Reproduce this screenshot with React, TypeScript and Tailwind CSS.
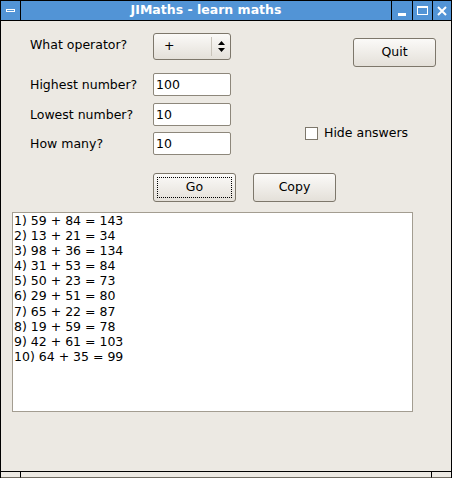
import { useState } from 'react'

const font = "font-['DejaVu_Sans',sans-serif]"

const results = [
  '1) 59 + 84 = 143',
  '2) 13 + 21 = 34',
  '3) 98 + 36 = 134',
  '4) 31 + 53 = 84',
  '5) 50 + 23 = 73',
  '6) 29 + 51 = 80',
  '7) 65 + 22 = 87',
  '8) 19 + 59 = 78',
  '9) 42 + 61 = 103',
  '10) 64 + 35 = 99',
]

const btnBase =
  'flex items-center rounded-[3px] border border-[#7d776b] bg-gradient-to-b from-[#fbfaf8] to-[#e4e0d9] text-[12.5px] text-black'
const btn = `${btnBase} justify-center`

const field =
  'h-[23px] w-[78px] rounded-[2px] border border-[#8d877b] bg-white px-[2px] text-[12.5px] text-black outline-none'

const TitleButton = ({ children, w }: { children: React.ReactNode; w: string }) => (
  <div className={`${w} flex h-full items-center justify-center bg-[#5294d6] border-l border-black`}>{children}</div>
)

const App = () => {
  const [hide, setHide] = useState(false)

  return (
    <div className={`${font} flex h-[478px] w-[452px] flex-col border-x border-t border-black bg-[#ece9e3] text-black`}>
      {/* title bar */}
      <div className="flex h-[20px] border-b border-black">
        <div className="flex w-[19px] items-center justify-center bg-[#5294d6]">
          <div className="h-[3px] w-[9px] border border-white" />
        </div>
        <div className="flex flex-1 items-center justify-center border-l border-black bg-[#5294d6] text-[12.5px] font-bold text-white">
          JIMaths - learn maths
        </div>
        <TitleButton w="w-[21px]">
          <div className="mt-[7px] h-[3px] w-[8px] bg-white" />
        </TitleButton>
        <TitleButton w="w-[20px]">
          <div className="h-[9px] w-[11px] border border-t-[2px] border-white" />
        </TitleButton>
        <TitleButton w="w-[19px]">
          <svg width="10" height="10" viewBox="0 0 10 10">
            <path d="M1 1 L9 9 M9 1 L1 9" stroke="white" strokeWidth="2" />
          </svg>
        </TitleButton>
      </div>

      {/* body */}
      <div className="flex flex-1 flex-col">
        <div className="flex pt-[12px]">
          <div className="ml-[29px] grid grid-cols-[123px_78px] items-center text-[12.5px]">
            <span className="pb-[3px]">What operator?</span>
            <div className={`${btnBase} h-[27px] w-[78px] justify-between pl-[10px]`}>
              <span>+</span>
              <div className="flex h-[19px] w-[19px] items-center justify-center border-l border-[#c9c4ba]">
                <svg width="7" height="11" viewBox="0 0 7 11">
                  <path d="M0 4 L3.5 0 L7 4 Z M0 7 L3.5 11 L7 7 Z" fill="black" />
                </svg>
              </div>
            </div>

            <span className="mt-[13px] pt-[2px]">Highest number?</span>
            <input className={`${field} mt-[13px]`} defaultValue="100" />

            <span className="mt-[7px] pt-[2px]">Lowest number?</span>
            <input className={`${field} mt-[7px]`} defaultValue="10" />

            <span className="mt-[6px] pt-[2px]">How many?</span>
            <input className={`${field} mt-[6px]`} defaultValue="10" />
          </div>

          <div className="flex flex-col">
            <button className={`${btn} ml-[122px] mt-[5px] h-[29px] w-[83px]`}>Quit</button>
            <label className="ml-[74px] mt-[57px] flex items-center gap-[6px] text-[12.5px]">
              <span
                onClick={() => setHide(!hide)}
                className="flex h-[13px] w-[13px] items-center justify-center border border-[#7d776b] bg-white text-[10px] leading-none"
              >
                {hide ? '✓' : ''}
              </span>
              Hide answers
            </label>
          </div>
        </div>

        <div className="ml-[152px] mt-[18px] flex gap-[17px]">
          <button className={`${btn} h-[29px] w-[83px] p-[3px]`}>
            <span className="flex h-full w-full items-center justify-center border border-dotted border-black">Go</span>
          </button>
          <button className={`${btn} h-[29px] w-[83px]`}>Copy</button>
        </div>

        <div className="ml-[11px] mt-[10px] h-[200px] w-[401px] border border-[#a39d91] bg-white px-[1px] text-[12.5px] leading-[15.1px]">
          {results.map((r) => (
            <div key={r}>{hide ? r.replace(/ = \d+$/, ' = ') : r}</div>
          ))}
        </div>
      </div>

      {/* bottom frame */}
      <div className="flex h-[7px] border-t border-black">
        <div className="w-[19px] border-b border-[#6f6a60] bg-[#ece9e3]" />
        <div className="flex-1 border-x border-black border-b border-b-[#6f6a60] bg-[#ece9e3]" />
        <div className="w-[19px] border-b border-[#6f6a60] bg-[#ece9e3]" />
      </div>
    </div>
  )
}

export default App
